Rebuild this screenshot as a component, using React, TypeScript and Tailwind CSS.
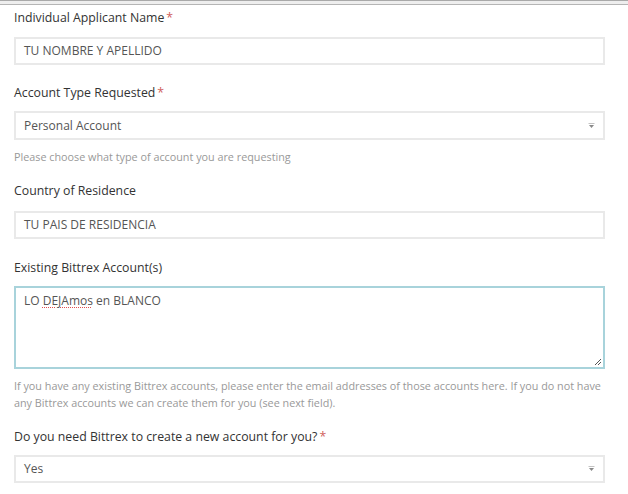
const font = { fontFamily: '"Open Sans", "Liberation Sans", sans-serif' };

function Label({ text, required }: { text: string; required?: boolean }) {
  return (
    <div className="h-[20px] leading-[20px] text-[12.3px] font-medium text-[#333]">
      {text}
      {required && <span className="text-[#d0605c] ml-[2px]">*</span>}
    </div>
  );
}

function Caret() {
  return (
    <svg width="7" height="6" viewBox="0 0 7 6" className="text-[#888]">
      <path d="M0.5 0.5h6" stroke="currentColor" strokeWidth="1" opacity="0.5" />
      <path d="M1 2h5l-2.5 3z" fill="currentColor" />
    </svg>
  );
}

function TextBox({ value, h = 'h-[28px]', select }: { value: string; h?: string; select?: boolean }) {
  return (
    <div className={`${h} border-2 border-[#e9e9e9] bg-white flex items-center justify-between pl-[8px] pr-[8px] text-[12px] text-[#555]`}>
      <span>{value}</span>
      {select && <Caret />}
    </div>
  );
}

function Help({ children, className = '' }: { children: React.ReactNode; className?: string }) {
  return <p className={`text-[10.8px] leading-[17px] text-[#999] ${className}`}>{children}</p>;
}

export default function App() {
  return (
    <div className="w-[628px] h-[494px] bg-white overflow-hidden" style={font}>
      {/* top edge */}
      <div className="h-[5px] border-t border-t-[#a9a9a9] border-b border-b-[#b5b5b5] bg-[#eeeeee]" />

      <div className="pl-[14px] pr-[23px] pt-[3px]">
        <Label text="Individual Applicant Name" required />
        <div className="mt-[9px]">
          <TextBox value="TU NOMBRE Y APELLIDO" />
        </div>

        <div className="mt-[18px]">
          <Label text="Account Type Requested" required />
        </div>
        <div className="mt-[8px]">
          <TextBox value="Personal Account" h="h-[29px]" select />
        </div>
        <Help className="mt-[8px]">Please choose what type of account you are requesting</Help>

        <div className="mt-[16px]">
          <Label text="Country of Residence" />
        </div>
        <div className="mt-[10px]">
          <TextBox value="TU PAIS DE RESIDENCIA" />
        </div>

        <div className="mt-[19px]">
          <Label text="Existing Bittrex Account(s)" />
        </div>
        <div className="mt-[8px] relative h-[83px] border-2 border-[#a8d3db] bg-white pl-[8px] pt-[4px] text-[12px] leading-[17px] text-[#555]">
          LO{' '}
          <span className="underline decoration-dotted decoration-[#e05050] decoration-[1px] underline-offset-[2px]">DEJAmos</span>{' '}
          en BLANCO
          <svg width="9" height="9" viewBox="0 0 9 9" className="absolute right-[1px] bottom-[1px]">
            <path d="M8 2L2 8M8 5L5 8" stroke="#555" strokeWidth="1" />
          </svg>
        </div>
        <Help className="mt-[8px]">
          If you have any existing Bittrex accounts, please enter the email addresses of those accounts here. If you do not have
          any Bittrex accounts we can create them for you (see next field).
        </Help>

        <div className="mt-[16px]">
          <Label text="Do you need Bittrex to create a new account for you?" required />
        </div>
        <div className="mt-[8px]">
          <TextBox value="Yes" select />
        </div>
      </div>
    </div>
  );
}
